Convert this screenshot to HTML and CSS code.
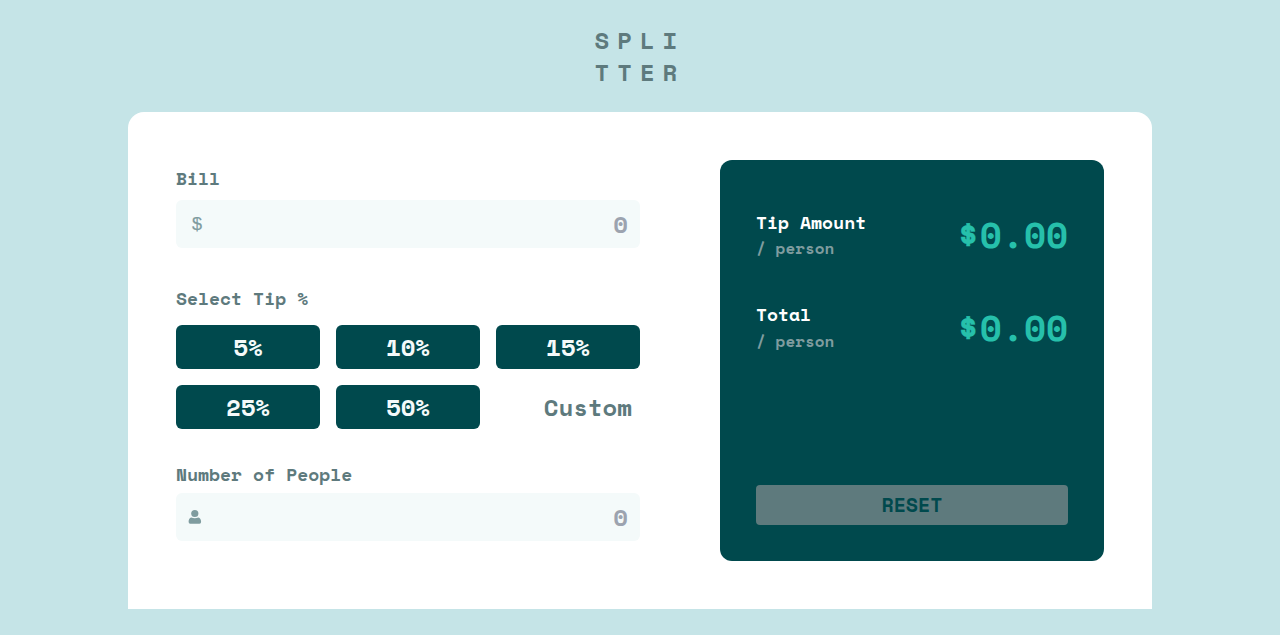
FILE: index.html
```html
<!DOCTYPE html>
<html lang="en">
<head>
<meta charset="utf-8">
<title>Splitter</title>
<link rel="stylesheet" href="styles.css">
</head>
<body>
<h1 class="logo">SPLI<br>TTER</h1>
<main class="card">
  <form class="form">
    <label class="label" for="bill">Bill</label>
    <div class="field">
      <span class="dollar">$</span>
      <input class="input" id="bill" type="text" placeholder="0">
    </div>
    <p class="label label-tip">Select Tip %</p>
    <div class="tips">
      <button class="tip" type="button">5%</button>
      <button class="tip" type="button">10%</button>
      <button class="tip" type="button">15%</button>
      <button class="tip" type="button">25%</button>
      <button class="tip" type="button">50%</button>
      <input class="custom" type="text" placeholder="Custom">
    </div>
    <label class="label label-people" for="people">Number of People</label>
    <div class="field">
      <svg class="person" viewBox="0 0 14 16" width="14" height="16"><circle cx="6.800" cy="4.500" r="3.600"/><path d="M3.200 8.600Q6.800 9.900 10.400 8.600Q13 9.400 13.100 12.800Q13.100 14.800 11.500 14.800H2.200Q.6 14.800 .6 12.800Q.6 9.400 3.200 8.600Z"/></svg>
      <input class="input" id="people" type="text" placeholder="0">
    </div>
  </form>
  <section class="panel">
    <div class="row">
      <div><p class="name">Tip Amount</p><p class="per">/ person</p></div>
      <p class="amount"><span class="sign">$</span>0.00</p>
    </div>
    <div class="row row-total">
      <div><p class="name">Total</p><p class="per">/ person</p></div>
      <p class="amount"><span class="sign">$</span>0.00</p>
    </div>
    <button class="reset" type="button">RESET</button>
  </section>
</main>
</body>
</html>
```

FILE: styles.css
```css
* { box-sizing: border-box; margin: 0; padding: 0; }
body {
  min-height: 635px;
  background: #c5e4e7;
  color: #5e7a7d;
  font-family: "Space Mono", "Liberation Mono", monospace;
  font-weight: 700;
}
button, input { font: inherit; border: 0; outline: 0; background: none; }
.logo {
  width: 91px;
  height: 112px;
  margin: 0 auto;
  padding-top: 24px;
  font-size: 24px;
  line-height: 32px;
  letter-spacing: 8px;
}
.card {
  display: grid;
  grid-template-columns: 464px 384px;
  gap: 80px;
  width: 1024px;
  height: 497px;
  margin: 0 auto;
  padding: 48px;
  background: #fff;
  border-radius: 16px 16px 0 0;
}
.form { padding-top: 6px; }
.label { display: block; margin-bottom: 10px; font-size: 18px; line-height: 24px; }
.label-tip { margin: 38px 0 15px; }
.label-people { margin: 33px 0 7px; }
.field {
  display: flex;
  align-items: center;
  height: 48px;
  padding: 0 12px;
  background: #f4fafa;
  border-radius: 6px;
}
.dollar { padding-left: 4px; color: #7f9c9f; font: 400 18px "Liberation Sans", sans-serif; -webkit-text-stroke: .2px #7f9c9f; }
.person { fill: #7f9c9f; }
.input { flex: 1; min-width: 0; height: 48px; font-size: 24px; text-align: right; }
.input::placeholder { color: #9ca3af; opacity: 1; }
.tips { display: grid; grid-template-columns: repeat(3, 144px); grid-auto-rows: 44px; gap: 16px; }
.tip { background: #00494d; color: #f4fafa; font-size: 24px; border-radius: 6px; }
.custom { width: 144px; padding-right: 8px; font-size: 24px; text-align: right; }
.custom::placeholder { color: #5e7a7d; opacity: 1; }
.panel {
  display: flex;
  flex-direction: column;
  height: 401px;
  padding: 48px 36px 36px;
  background: #00494d;
  border-radius: 12px;
}
.row { display: flex; justify-content: space-between; align-items: center; height: 53px; margin-bottom: 40px; }
.name { color: #fff; font-size: 18px; line-height: 27px; }
.per { color: #7f9c9f; font-size: 16px; line-height: 24px; }
.row-total .name { margin-top: -1px; line-height: 26px; }
.row-total .per { margin-bottom: -2px; line-height: 29px; }
.amount { display: flex; align-items: center; color: #26c0ab; font-size: 36px; line-height: 53px; }
.sign { margin-right: 1px; font-size: 35px; -webkit-text-stroke: .3px #26c0ab; }
.reset {
  height: 40px;
  margin-top: auto;
  padding-bottom: 2px;
  background: #5e7a7d;
  color: #00494d;
  font-size: 20px;
  border-radius: 4px;
}
```
